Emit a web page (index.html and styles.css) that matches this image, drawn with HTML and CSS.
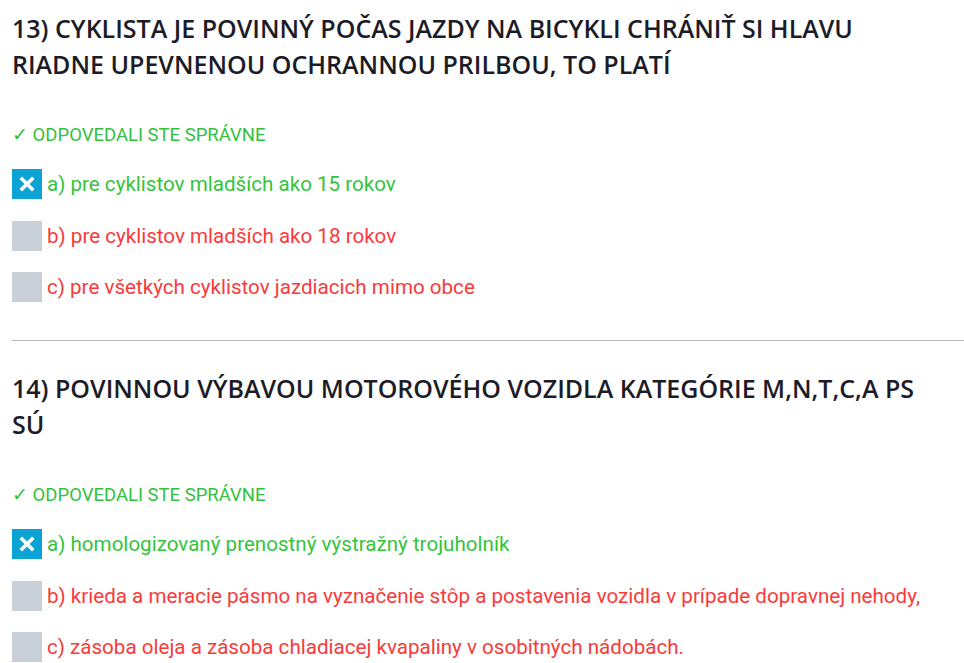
FILE: index.html
```html
<!DOCTYPE html>
<html lang="sk">
<head>
<meta charset="utf-8">
<link rel="stylesheet" href="styles.css">
</head>
<body>
<div class="page">
  <section class="question">
    <h2 class="q-title">13) CYKLISTA JE POVINNÝ POČAS JAZDY NA BICYKLI CHRÁNIŤ SI HLAVU RIADNE UPEVNENOU OCHRANNOU PRILBOU, TO PLATÍ</h2>
    <div class="status">✓ ODPOVEDALI STE SPRÁVNE</div>
    <ul class="options">
      <li class="opt correct"><span class="box checked"><svg viewBox="0 0 30 30" width="30" height="30"><path d="M10 10 L20 20 M20 10 L10 20" stroke="#fff" stroke-width="3.6" stroke-linecap="square"/></svg></span><span class="label">a) pre cyklistov mladších ako 15 rokov</span></li>
      <li class="opt wrong"><span class="box"></span><span class="label">b) pre cyklistov mladších ako 18 rokov</span></li>
      <li class="opt wrong"><span class="box"></span><span class="label">c) pre všetkých cyklistov jazdiacich mimo obce</span></li>
    </ul>
  </section>
  <hr class="sep">
  <section class="question">
    <h2 class="q-title">14) POVINNOU VÝBAVOU MOTOROVÉHO VOZIDLA KATEGÓRIE M,N,T,C,A PS SÚ</h2>
    <div class="status">✓ ODPOVEDALI STE SPRÁVNE</div>
    <ul class="options">
      <li class="opt correct"><span class="box checked"><svg viewBox="0 0 30 30" width="30" height="30"><path d="M10 10 L20 20 M20 10 L10 20" stroke="#fff" stroke-width="3.6" stroke-linecap="square"/></svg></span><span class="label">a) homologizovaný prenostný výstražný trojuholník</span></li>
      <li class="opt wrong"><span class="box"></span><span class="label">b) krieda a meracie pásmo na vyznačenie stôp a postavenia vozidla v prípade dopravnej nehody,</span></li>
      <li class="opt wrong"><span class="box"></span><span class="label">c) zásoba oleja a zásoba chladiacej kvapaliny v osobitných nádobách.</span></li>
    </ul>
  </section>
</div>
</body>
</html>
```

FILE: styles.css
```css
html, body {
  margin: 0;
  padding: 0;
  background: #fff;
}
.page {
  padding: 10px 0 0 12px;
}
.q-title {
  margin: 0;
  padding-right: 28px;
  font-family: "Open Sans", sans-serif;
  font-weight: 600;
  font-size: 25px;
  line-height: 36px;
  color: #1c1c28;
}
.status {
  margin-top: 43px;
  font-family: Roboto, sans-serif;
  font-size: 18.5px;
  line-height: 20px;
  color: #33c13d;
}
.options {
  list-style: none;
  margin: 24px 0 0;
  padding: 0;
  display: flex;
  flex-direction: column;
  gap: 21.5px;
}
.opt {
  display: flex;
  align-items: center;
  gap: 5px;
  font-family: Roboto, sans-serif;
  font-size: 20.6px;
  line-height: 30px;
  white-space: nowrap;
}
.box {
  width: 30px;
  height: 30px;
  flex: none;
  background: #c9cfd7;
  display: block;
}
.box svg { display: block; }
.box.checked {
  background: #0aa3d3;
}
.correct .label { color: #35c43b; }
.wrong .label { color: #fa3a3a; }
.sep {
  margin: 38px 0 29px;
  border: 0;
  border-top: 1px solid #b5b5b5;
  height: 0;
}
```
